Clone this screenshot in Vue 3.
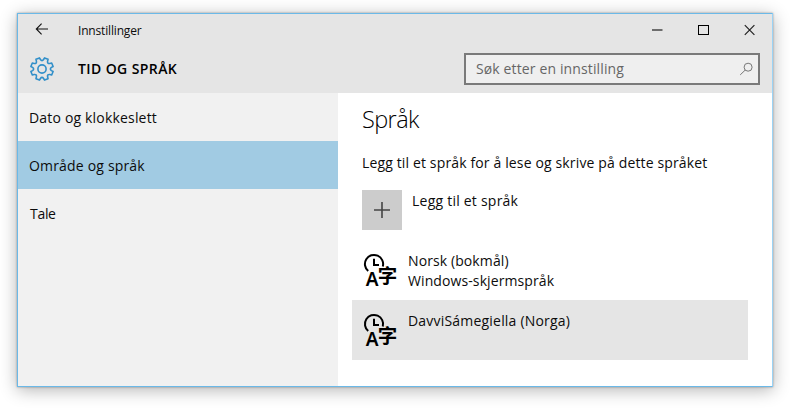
<script setup>
const sections = [
  { name: 'Dato og klokkeslett', cls: 'date' },
  { name: 'Område og språk', cls: 'region', active: true },
  { name: 'Tale', cls: 'speech' },
]
const languages = [
  { name: 'Norsk (bokmål)', note: 'Windows-skjermspråk', cls: 'norsk' },
  { name: 'DavviSámegiella (Norga)', cls: 'davvi', active: true },
]

// Eight-toothed cog outline around the origin
const point = (r, deg) => {
  const a = (deg * Math.PI) / 180
  return `${(r * Math.cos(a)).toFixed(2)} ${(r * Math.sin(a)).toFixed(2)}`
}
const cog = Array.from({ length: 8 }, (_, i) => {
  const a = i * 45 + 22.5
  return `${i ? 'L' : 'M'}${point(9.6, a - 13)} L${point(11.4, a - 9.5)} L${point(11.4, a + 9.5)} L${point(9.6, a + 13)} Q${point(7.3, a + 22.5)} ${point(9.6, a + 32)}`
}).join(' ') + 'Z'
</script>

<template>
  <div class="desktop">
    <main class="window">
      <header class="head">
        <div class="titlebar">
          <svg class="back" width="14" height="12" viewBox="0 0 14 12"><path d="M13 6H1.5M6.6 .7L1.3 6l5.3 5.3" /></svg>
          <span class="caption">Innstillinger</span>
          <svg class="min" width="12" height="12" viewBox="0 0 12 12"><path d="M1 6H11.5" /></svg>
          <svg class="max" width="12" height="12" viewBox="0 0 12 12"><rect x="1.5" y="1.5" width="10" height="9" /></svg>
          <svg class="close" width="12" height="12" viewBox="0 0 12 12"><path d="M1.8 1.2l9.6 9.6M11.4 1.2l-9.6 9.6" /></svg>
        </div>
        <div class="toolbar">
          <svg class="gear" width="26" height="26" viewBox="-13 -13 26 26"><path :d="cog" /><circle r="4.1" /></svg>
          <h1>TID OG SPRÅK</h1>
          <div class="search">
            <span>Søk etter en innstilling</span>
            <svg width="14" height="14" viewBox="0 0 14 14"><circle cx="9.1" cy="5.2" r="4" /><path d="M6.2 8.1L1.2 12.9" /></svg>
          </div>
        </div>
      </header>
      <div class="body">
        <nav>
          <div v-for="s in sections" :key="s.name" class="section" :class="[s.cls, { active: s.active }]"><span>{{ s.name }}</span></div>
        </nav>
        <section class="content">
          <h2>Språk</h2>
          <p class="hint">Legg til et språk for å lese og skrive på dette språket</p>
          <div class="add">
            <div class="plus"><svg width="16" height="16" viewBox="0 0 16 16"><path d="M0 8H16M8 0V16" /></svg></div>
            <span>Legg til et språk</span>
          </div>
          <div v-for="l in languages" :key="l.name" class="language" :class="[l.cls, { active: l.active }]">
            <svg class="glyph" width="36" height="44" viewBox="0 0 36 44">
              <path d="M6.2 19A9.1 9.1 0 1 1 20.8 14.4" />
              <path d="M12 6.7V13H17" />
              <text class="latin" x="3.8" y="34">A</text>
              <text class="han" x="15.8" y="30.6">字</text>
            </svg>
            <div class="labels"><div><span class="name">{{ l.name }}</span></div><div v-if="l.note"><span class="note">{{ l.note }}</span></div></div>
          </div>
        </section>
      </div>
    </main>
  </div>
</template>

<style>
body { background: #fff; }
</style>

<style scoped>
.desktop {
  box-sizing: border-box;
  width: 790px;
  height: 408px;
  padding: 13px 17px 21px 17px;
  overflow: hidden;
  font-family: "Open Sans", "Noto Sans", sans-serif;
  font-size: 14px;
  color: #0c0c0c;
}
.window {
  box-sizing: border-box;
  width: 756px;
  height: 374px;
  display: flex;
  flex-direction: column;
  border: 1px solid #6bb9e8;
  border-right-color: #9bd3f5;
  background: #fff;
  box-shadow: 0 0 2px rgba(0, 0, 0, .35), 0 3px 16px rgba(0, 0, 0, .3);
}
span, h1, h2, p { white-space: nowrap; margin: 0; }
svg { display: block; flex: none; fill: none; stroke: #111; }
.head { height: 79px; background: #e5e5e5; }
.titlebar { display: flex; align-items: center; height: 31px; padding-left: 17px; }
.back { margin-top: -1px; stroke-width: 1.1; }
.caption { margin-left: 29px; font-size: 12px; letter-spacing: -.17px; flex: 1; padding-top: 2px; }
.min { margin-right: 34px; stroke: #444; stroke-width: 1.5; }
.max { margin-right: 34px; stroke: #000; }
.close { margin-right: 17px; stroke: #222; stroke-width: 1.2; }
.toolbar { display: flex; align-items: center; height: 48px; padding: 0 12px 0 11px; }
.gear { stroke: #318fc9; stroke-width: 1.6; stroke-linejoin: round; }
h1 { margin-left: 23px; padding-bottom: 1px; flex: 1; font-size: 14px; font-weight: 600; letter-spacing: .4px; color: #000; }
.search {
  box-sizing: border-box;
  display: flex;
  align-items: center;
  justify-content: space-between;
  width: 296px;
  height: 32px;
  padding: 0 5px 0 10px;
  border: 2px solid #7a7a7a;
  background: #efefef;
  color: #666;
}
.search span { padding-bottom: 2px; letter-spacing: .13px; }
.search svg { stroke: #777; }
.body { display: flex; flex: 1; }
nav { width: 320px; background: #f1f1f1; }
.section { display: flex; align-items: center; height: 48px; padding-left: 11px; letter-spacing: .18px; }
.section.speech { padding-left: 12px; letter-spacing: -.3px; }
.section.active { background: #a1cbe3; }
.content { flex: 1; padding: 9px 24px 0 24px; }
h2 { height: 34px; font-size: 23.5px; line-height: 35px; font-weight: 300; letter-spacing: -.6px; color: #000; }
.hint { height: 20px; margin-top: 17px; line-height: 20px; letter-spacing: .14px; }
.add { display: flex; height: 40px; margin-top: 17px; line-height: 22px; letter-spacing: .23px; }
.plus { display: grid; place-items: center; width: 40px; height: 40px; margin-right: 10px; background: #ccc; }
.plus svg { stroke: #444; stroke-width: 1.6; }
.language { display: flex; box-sizing: border-box; height: 60px; width: 396px; margin-left: -10px; padding: 11px 0 0 10px; }
.language.norsk { margin-top: 10px; letter-spacing: .1px; }
.language.davvi { letter-spacing: .2px; }
.language.active { background: #e5e5e5; }
.labels { margin-left: 10px; line-height: 20px; }
.glyph { margin-top: 1px; stroke: #000; stroke-width: 2; }
.glyph text { stroke: none; fill: #000; letter-spacing: 0; }
.latin { font-family: "Noto Sans", sans-serif; font-size: 19px; font-weight: 600; }
.han { font-family: "Noto Sans CJK SC", sans-serif; font-size: 19.5px; font-weight: 700; }
</style>
